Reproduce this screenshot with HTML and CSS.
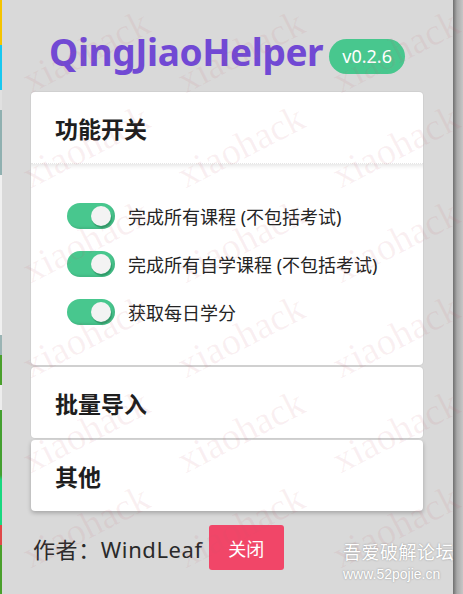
FILE: index.html
```html
<!DOCTYPE html>
<html lang="zh-CN">
<head>
    <meta charset="UTF-8">
    <title>QingJiaoHelper</title>
    <link rel="stylesheet" href="styles.css">
</head>
<body>
    <div class="edge"></div>
    <div class="panel">
        <div class="brand">
            <h1 class="title">QingJiaoHelper</h1>
            <span class="tag">v0.2.6</span>
        </div>

        <div class="card">
            <div class="card-header">功能开关</div>
            <div class="card-content">
                <label class="option">
                    <span class="switch on"></span>
                    <span>完成所有课程 (不包括考试)</span>
                </label>
                <label class="option">
                    <span class="switch on"></span>
                    <span>完成所有自学课程 (不包括考试)</span>
                </label>
                <label class="option">
                    <span class="switch on"></span>
                    <span>获取每日学分</span>
                </label>
            </div>
        </div>
        <div class="card">
            <div class="card-header">批量导入</div>
        </div>
        <div class="card last">
            <div class="card-header">其他</div>
        </div>

        <div class="footer">
            <span class="author">作者：WindLeaf</span>
            <button class="close">关闭</button>
        </div>
    </div>

    <!-- watermarks drawn over the screenshot -->
    <div class="watermark">
        <span>xiaohack</span><span>xiaohack</span><span>xiaohack</span>
        <span>xiaohack</span><span>xiaohack</span><span>xiaohack</span>
        <span>xiaohack</span><span>xiaohack</span><span>xiaohack</span>
        <span>xiaohack</span><span>xiaohack</span><span>xiaohack</span>
        <span>xiaohack</span><span>xiaohack</span><span>xiaohack</span>
        <span>xiaohack</span><span>xiaohack</span><span>xiaohack</span>
    </div>
    <div class="forum">
        <div class="forum-name">吾爱破解论坛</div>
        <div class="forum-url">www.52pojie.cn</div>
    </div>
</body>
</html>
```

FILE: styles.css
```css
html, body {
    margin: 0;
    height: 594px;
    overflow: hidden;
}
body {
    position: relative;
    display: flex;
    font-family: "Noto Sans", "Noto Sans CJK SC", sans-serif;
    color: #242424;
    background: linear-gradient(to right, #d9d9d9 453px, #6f6f6f 453px, #a9a9a9 457px, #c6c6c6 463px);
}
.edge {
    width: 2px;
    flex: none;
    background: linear-gradient(to bottom,
        #f5c400 0, #f5c400 45px, #18c8f0 45px, #18c8f0 90px,
        #e0e0e0 90px, #e0e0e0 110px, #8fb0b0 110px, #8fb0b0 175px,
        #f0f0f0 175px, #f0f0f0 335px, #9ab4b4 335px, #9ab4b4 355px,
        #4aa02c 355px, #4aa02c 385px, #ededed 385px, #ededed 410px,
        #44a030 410px, #44a030 475px, #18d880 480px, #18d880 525px,
        #e04848 525px, #e04848 545px, #4aa02c 545px);
}
.panel {
    width: 451px;
    box-sizing: border-box;
    padding: 22px 30px 0 29px;
}
.brand {
    height: 58px;
    margin-bottom: 12px;
    display: flex;
    align-items: center;
    justify-content: center;
    gap: 6px;
}
.title {
    margin: 0;
    font-family: "Noto Sans", sans-serif;
    font-size: 37px;
    font-weight: 700;
    letter-spacing: -0.4px;
    color: #7149d4;
    line-height: 1;
}
.tag {
    margin-top: 10px;
    height: 35px;
    padding: 0 13px;
    display: flex;
    align-items: center;
    border-radius: 18px;
    background-color: #48c78e;
    color: #fff;
    font-size: 18px;
}
.card {
    background-color: #fff;
    border-radius: 4px;
    box-shadow: 0 0 0 1px rgba(10,10,10,0.04);
    margin-bottom: 2px;
}
.card.last {
    box-shadow: 0 2px 4px rgba(10,10,10,0.25);
}
.card-header {
    height: 71px;
    padding-left: 24px;
    display: flex;
    align-items: center;
    font-size: 23px;
    font-weight: 700;
    color: #1e1e1e;
}
.card-content {
    border-top: 1px dotted #e6e6e6;
    box-shadow: inset 0 5px 4px -3px rgba(10,10,10,0.1);
    padding: 39px 0 40px 36px;
    display: flex;
    flex-direction: column;
    gap: 22px;
}
.option {
    display: flex;
    align-items: center;
    gap: 13px;
    font-size: 18px;
    height: 26px;
}
.switch {
    position: relative;
    width: 48px;
    height: 26px;
    border-radius: 13px;
    background-color: #48c78e;
    box-shadow: inset -2px -2px 2px rgba(0,0,0,0.08);
}
.switch::after {
    content: "";
    position: absolute;
    top: 3px;
    right: 4px;
    width: 20px;
    height: 20px;
    border-radius: 50%;
    background-color: #f3f3f3;
    box-shadow: 1px 2px 1px #2e9a68;
}
.footer {
    margin-top: 14px;
    display: flex;
    align-items: center;
    gap: 6px;
}
.author {
    font-size: 22px;
    letter-spacing: 0.6px;
    color: #2a2a2a;
    padding-left: 2px;
}
.close {
    width: 75px;
    height: 45px;
    border: none;
    border-radius: 3px;
    background-color: #f14668;
    color: #fff;
    font-family: "Noto Sans CJK SC", sans-serif;
    font-size: 18px;
}
.watermark {
    position: absolute;
    top: 0;
    left: 0;
    width: 463px;
    height: 594px;
    overflow: hidden;
    box-sizing: border-box;
    padding: 3px 0 0 8px;
    display: grid;
    grid-template-columns: repeat(3, 155px);
    grid-auto-rows: 95px;
    pointer-events: none;
}
.watermark span {
    display: flex;
    align-items: center;
    justify-content: center;
    font-family: "Liberation Serif", serif;
    font-size: 38px;
    color: rgba(200, 90, 110, 0.09);
    transform: rotate(-27deg);
}
.forum {
    position: absolute;
    right: 9px;
    top: 543px;
    color: #fff;
    text-shadow: 0 0 2px rgba(0,0,0,0.35);
    line-height: 1;
}
.forum-name {
    font-size: 18px;
    letter-spacing: 0.5px;
}
.forum-url {
    margin-top: 6px;
    font-family: "Liberation Sans", sans-serif;
    font-size: 14px;
}
```
